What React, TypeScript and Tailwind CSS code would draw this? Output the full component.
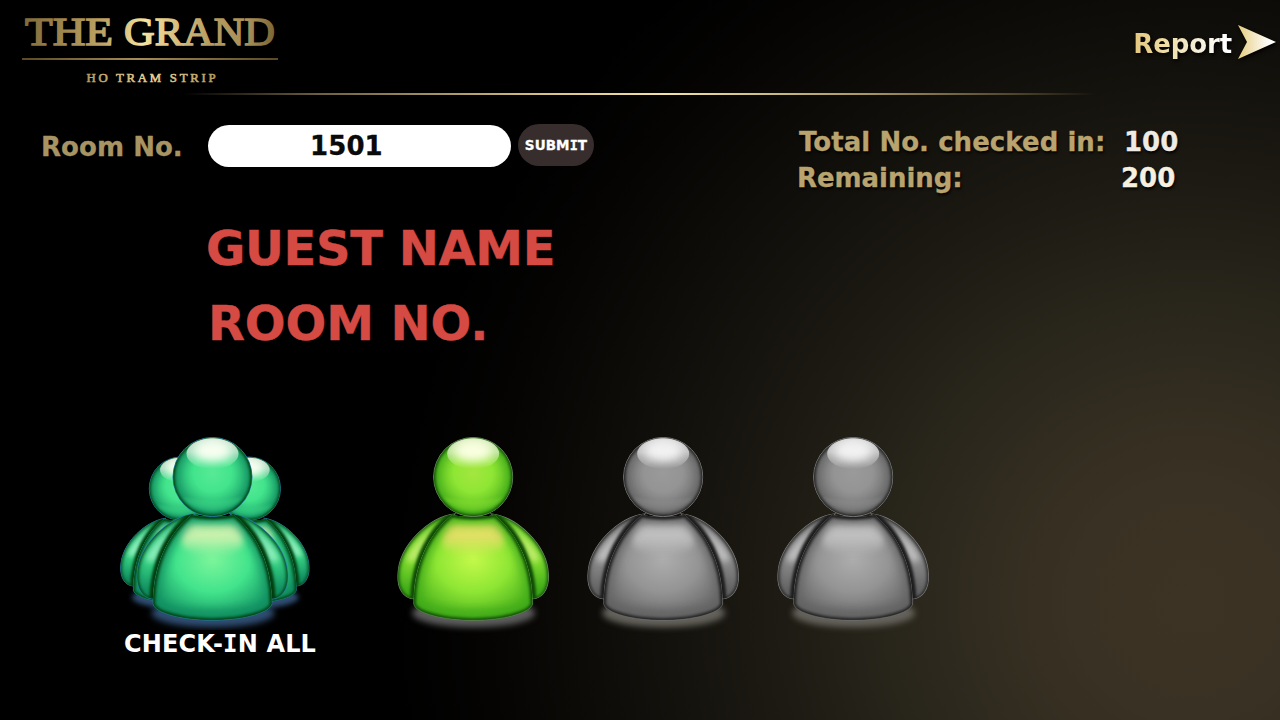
import React, { useId } from "react";

type Palette = {
  light: string;
  mid: string;
  deep: string;
  head: string;
  edge: string;
  rim: string;
  chest: string;
  gloss: string;
  arm: string;
  glow: string;
};

const lime: Palette = {
  light: "#c4f94a", mid: "#8fe634", deep: "#42ac1a", head: "#a4e640", edge: "#0f4a06", rim: "#6f8a66",
  chest: "#f8dc74", gloss: "#fdffe6", arm: "#cdf07a", glow: "#5c5c5c",
};
const grey: Palette = {
  light: "#adadad", mid: "#949494", deep: "#646464", head: "#9a9a9a", edge: "#1c1c1c", rim: "#80807e",
  chest: "#cccccc", gloss: "#f5f5f5", arm: "#cacaca", glow: "#64625b",
};
const jade: Palette = {
  light: "#7df59b", mid: "#42e48c", deep: "#129062", head: "#58ea96", edge: "#003c0c", rim: "#2780ac",
  chest: "#f2f4b8", gloss: "#fdfff4", arm: "#a2f4c8", glow: "#2f4d72",
};

const BODY =
  "M216 285 C165 325 102 410 101 552 C108 580 190 601 279 601 C368 601 450 580 458 552 C457 410 394 325 344 285 C310 293 250 293 216 285Z";
const LEFT_ARM =
  "M224 282 C152 290 56 372 54 465 C52 507 72 535 101 536 C102 430 150 335 224 282Z";
const RIGHT_ARM =
  "M335 282 C407 290 503 372 505 465 C507 507 487 535 458 536 C457 430 409 335 335 282Z";

function Figure({ p, transform }: { p: Palette; transform?: string }) {
  const id = useId().replace(/[^a-zA-Z0-9]/g, "");
  const u = (n: string) => `url(#${id}${n})`;
  return (
    <g transform={transform}>
      <defs>
        <radialGradient id={id + "b"} cx="0.5" cy="0.42" r="0.62">
          <stop offset="0" stopColor={p.light} />
          <stop offset="0.5" stopColor={p.mid} />
          <stop offset="1" stopColor={p.deep} />
        </radialGradient>
        <radialGradient id={id + "h"} cx="0.5" cy="0.45" r="0.6">
          <stop offset="0" stopColor={p.head} />
          <stop offset="0.4" stopColor={p.mid} />
          <stop offset="1" stopColor={p.deep} />
        </radialGradient>
        <linearGradient id={id + "a"} x1="0" y1="0" x2="0" y2="1">
          <stop offset="0" stopColor={p.mid} />
          <stop offset="0.5" stopColor={p.mid} />
          <stop offset="0.9" stopColor={p.deep} />
        </linearGradient>
        <linearGradient id={id + "g"} x1="0" y1="0" x2="0" y2="1">
          <stop offset="0" stopColor={p.gloss} stopOpacity="0.85" />
          <stop offset="0.45" stopColor={p.gloss} stopOpacity="0.65" />
          <stop offset="1" stopColor={p.gloss} stopOpacity="0" />
        </linearGradient>
        <linearGradient id={id + "c"} x1="0" y1="0" x2="0" y2="1">
          <stop offset="0" stopColor={p.chest} stopOpacity="0.7" />
          <stop offset="0.45" stopColor={p.chest} stopOpacity="0.75" />
          <stop offset="1" stopColor={p.chest} stopOpacity="0" />
        </linearGradient>
        <filter id={id + "s"} x="-30%" y="-50%" width="160%" height="200%" colorInterpolationFilters="sRGB">
          <feGaussianBlur stdDeviation="9" />
        </filter>
        <filter id={id + "t"} x="-30%" y="-50%" width="160%" height="200%" colorInterpolationFilters="sRGB">
          <feGaussianBlur stdDeviation="5" />
        </filter>
        <filter id={id + "w"} x="-30%" y="-60%" width="160%" height="220%" colorInterpolationFilters="sRGB">
          <feGaussianBlur stdDeviation="13" />
        </filter>
        <clipPath id={id + "kb"}><path d={BODY} /></clipPath>
        <clipPath id={id + "kl"}><path d={LEFT_ARM} /></clipPath>
        <clipPath id={id + "kr"}><path d={RIGHT_ARM} /></clipPath>
        <clipPath id={id + "kh"}><circle cx="279.500" cy="171" r="118" /></clipPath>
      </defs>
      <ellipse cx="281" cy="579" rx="184" ry="43" fill={p.glow} filter={u("s")} />
      {[LEFT_ARM, RIGHT_ARM].map((d, i) => (
        <g key={d}>
          <path d={d} fill={u("a")} stroke={p.rim} strokeWidth="3.500" />
          <g clipPath={u(i ? "kr" : "kl")}>
            <path
              d={i ? "M370 305 C420 325 478 385 482 418 C466 428 446 428 434 412 C424 372 400 332 370 305Z" : "M189 305 C139 325 81 385 77 418 C93 428 113 428 125 412 C135 372 159 332 189 305Z"}
              fill={p.arm}
              opacity="0.8"
              filter={u("s")}
            />
            <path d={d} fill="none" stroke={p.deep} strokeWidth="22" opacity="0.6" filter={u("s")} />
            <path d={d} fill="none" stroke={p.edge} strokeWidth="8" filter={u("t")} />
            <path d={BODY} fill="none" stroke={p.edge} strokeWidth="22" filter={u("t")} />
          </g>
        </g>
      ))}
      <path d={BODY} fill={u("b")} />
      <g clipPath={u("kb")}>
        <path d="M101 545 C180 572 380 572 458 545 V610 H101Z" fill={p.deep} opacity="0.5" filter={u("s")} />
        <path d="M205 308 H354 C372 325 378 345 372 375 C340 416 218 416 187 375 C181 345 187 325 205 308Z" fill={u("c")} filter={u("s")} />
        <path d={BODY} fill="none" stroke={p.deep} strokeWidth="44" opacity="0.75" filter={u("w")} />
        <path d={BODY} fill="none" stroke={p.edge} strokeWidth="13" filter={u("t")} />
        <ellipse cx="279" cy="284" rx="64" ry="11" fill={p.edge} opacity="0.75" filter={u("t")} />
      </g>
      <path d="M101 536 V552 C108 580 190 601 279 601 C368 601 450 580 458 552 V536" fill="none" stroke={p.rim} strokeWidth="2.500" opacity="0.5" />
      <circle cx="279.500" cy="171" r="118.500" fill={u("h")} stroke={p.rim} strokeWidth="3" />
      <g clipPath={u("kh")}>
        <circle cx="279.500" cy="171" r="118" fill="none" stroke={p.deep} strokeWidth="36" opacity="0.8" filter={u("w")} />
        <circle cx="279.500" cy="171" r="120" fill="none" stroke={p.edge} strokeWidth="13" filter={u("t")} />
        <path d="M190 232 Q280 252 370 232 Q345 268 279 272 Q213 268 190 232Z" fill={p.mid} opacity="0.35" filter={u("t")} />
        <ellipse cx="279.500" cy="101" rx="78" ry="46" fill={u("g")} />
        <ellipse cx="279.500" cy="92" rx="54" ry="30" fill={p.gloss} opacity="0.9" filter={u("w")} />
      </g>
    </g>
  );
}

function Person({ p, label }: { p: Palette; label: string }) {
  return (
    <button aria-label={label} className="h-[220px] w-[190px]">
      <svg viewBox="0 0 570 660" className="block h-[220px] w-[190px]">
        <Figure p={p} />
      </svg>
    </button>
  );
}

function SerifI() {
  return <span className="font-['DejaVu_Sans_Mono']">I</span>;
}

function Logo() {
  return (
    <svg viewBox="0 0 256 84" className="ml-[22px] mt-[8px] h-[84px] w-[256px] font-['Liberation_Serif',serif] font-normal">
      <defs>
        <linearGradient id="gold" gradientUnits="userSpaceOnUse" x1="0" y1="0" x2="256" y2="30">
          <stop offset="0" stopColor="#7d6839" />
          <stop offset="0.18" stopColor="#a08850" />
          <stop offset="0.33" stopColor="#bfa465" />
          <stop offset="0.48" stopColor="#f6e3a0" />
          <stop offset="0.58" stopColor="#dcc587" />
          <stop offset="0.75" stopColor="#b39a5e" />
          <stop offset="0.88" stopColor="#a8905a" />
          <stop offset="1" stopColor="#75602f" />
        </linearGradient>
        <linearGradient id="gold-rule">
          <stop offset="0" stopColor="#5c4a25" />
          <stop offset="0.45" stopColor="#a58d55" />
          <stop offset="1" stopColor="#5c4a25" />
        </linearGradient>
        <linearGradient id="gold-sub" gradientUnits="userSpaceOnUse" x1="64" y1="0" x2="194" y2="0">
          <stop offset="0" stopColor="#b79c60" />
          <stop offset="0.5" stopColor="#e9d596" />
          <stop offset="1" stopColor="#b79c60" />
        </linearGradient>
      </defs>
      <g fill="url(#gold)" stroke="url(#gold)" strokeWidth="1.500" fontSize="40">
        <text x="3" y="36.800" textLength="88" lengthAdjust="spacingAndGlyphs">THE</text>
        <text x="102" y="36.800" textLength="151" lengthAdjust="spacingAndGlyphs">GRAND</text>
      </g>
      <rect x="0" y="50" width="256" height="2" fill="url(#gold-rule)" />
      <text x="64.500" y="73.500" fontSize="12.800" textLength="129" fill="url(#gold-sub)" stroke="url(#gold-sub)" strokeWidth="0.600">HO TRAM STRIP</text>
    </svg>
  );
}

export default function App() {
  return (
    <main className="flex h-[720px] w-[1280px] flex-col overflow-hidden bg-black bg-[radial-gradient(circle_800px_at_1190px_600px,#3d3325_0%,#393123_15%,#322c20_26%,#28251b_38%,#1e1b14_51%,#14120d_65%,#0b0a07_78%,#050403_88%,#000_100%)] font-['DejaVu_Sans',sans-serif] font-bold whitespace-nowrap">
      <header className="flex h-[93px] justify-between">
        <Logo />
        <a className="mr-[4px] mt-[25px] flex h-[34px] items-center gap-[6px] drop-shadow-[1px_2px_2px_#000]">
          <span className="bg-[linear-gradient(90deg,#e3c67c,#f0dfa8_35%,#f5eed8_65%,#fff_92%)] bg-clip-text pt-[3px] text-[26px] leading-[34px] tracking-[-0.1px] text-transparent">Report</span>
          <svg viewBox="0 0 38 34" className="h-[34px] w-[38px]">
            <defs>
              <linearGradient id="arrow">
                <stop offset="0" stopColor="#e6cb80" />
                <stop offset="0.4" stopColor="#f2e6bf" />
                <stop offset="0.85" stopColor="#fff" />
              </linearGradient>
            </defs>
            <path d="M0 0 L38 17 L0 34 L9 17Z" fill="url(#arrow)" />
          </svg>
        </a>
      </header>
      <div className="ml-[183px] h-[2px] w-[912px] shrink-0 bg-[linear-gradient(90deg,transparent,#6e6140_15%,#d9c384_40%,#f3e2a8_53%,#a99663_75%,#4a4129_92%,transparent)]" />

      <section className="flex h-[116px] pt-[29px] [-webkit-text-stroke:0.3px]">
        <label className="ml-[41px] w-[167px] pt-[2px] text-[26px] leading-[42px] tracking-[0.05px] text-[#a89462]">Room No.</label>
        <div className="mt-px h-[42px] w-[303px] rounded-full bg-white pl-[102px] text-[26px] leading-[42px] tracking-[0.1px] text-[#0a0a0a]">1501</div>
        <button className="ml-[7px] h-[42px] w-[76px] rounded-full bg-[#362d2c] text-[13.500px] leading-[43px] tracking-[0.1px] text-white">
          SUBM<SerifI />T
        </button>
        <dl className="ml-[203px] w-[390px] text-[26px] leading-9 text-[#b9a36e] [text-shadow:1px_2px_3px_#000]">
          <div className="flex pl-[2px]">
            <dt className="w-[325px] tracking-[0.05px]">Total No. checked in:</dt>
            <dd className="text-[#eeebe4]">100</dd>
          </div>
          <div className="flex">
            <dt className="w-[324px] tracking-[-0.05px]">Remaining:</dt>
            <dd className="text-[#f5f0e0]">200</dd>
          </div>
        </dl>
      </section>

      <section className="ml-[206px] h-[209px] text-[48px] leading-[75px] text-[#d54a43] [-webkit-text-stroke:0.4px]">
        <p className="tracking-[-0.4px]">GUEST NAME</p>
        <p className="pl-[2px] tracking-[-0.1px]">ROOM NO.</p>
      </section>

      <section className="flex">
        <button className="ml-[100px] w-[240px] text-left">
          <svg viewBox="0 0 690 630" className="block h-[210px] w-[230px]">
            <Figure p={jade} transform="translate(19 69) scale(.8)" />
            <Figure p={jade} transform="translate(223 69) scale(.8)" />
            <Figure p={jade} transform="translate(58 0)" />
          </svg>
          <span className="block pl-[24px] text-[24px] leading-7 tracking-[0.15px] text-white">CHECK-<SerifI />N ALL</span>
        </button>
        <div className="ml-[40px] flex">
          <Person p={lime} label="Guest 1" />
          <Person p={grey} label="Guest 2" />
          <Person p={grey} label="Guest 3" />
        </div>
      </section>
    </main>
  );
}
